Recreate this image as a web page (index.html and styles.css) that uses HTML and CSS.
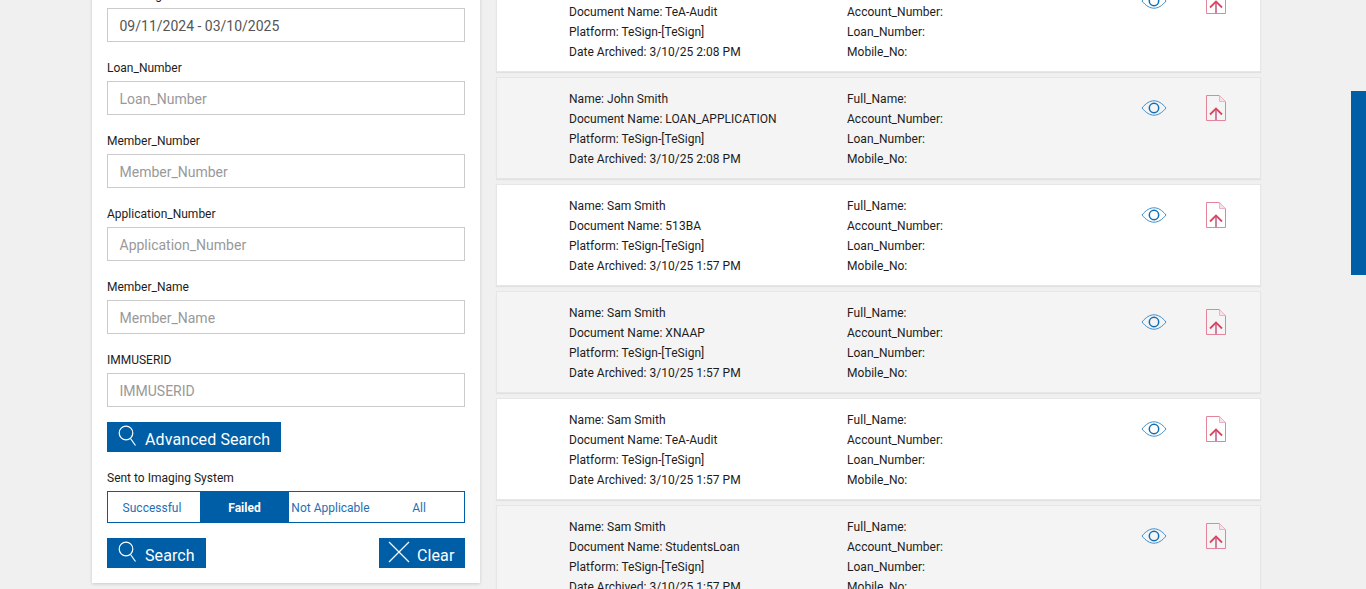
FILE: index.html
```html
<!DOCTYPE html>
<html lang="en">
<head>
<meta charset="utf-8">
<title>Archive Search</title>
<link rel="stylesheet" href="styles.css">
</head>
<body>
<svg class="defs" width="0" height="0" aria-hidden="true">
  <symbol id="eye" viewBox="0 0 26 18">
    <path d="M1 9C5 4 9 1.800 13 1.800S21 4 25 9C21 14 17 16.200 13 16.200S5 14 1 9Z" fill="none" stroke="#3f8fcb" stroke-width="1"/>
    <circle cx="13" cy="9" r="4.700" fill="none" stroke="#0f6db5" stroke-width="1.500"/>
  </symbol>
  <symbol id="doc" viewBox="0 0 20 26">
    <path d="M.5.500H13.500L19.500 6.500V25.500H.5Z" fill="none" stroke="#e4849a" stroke-width="1"/>
    <path d="M13.500.500V6.500H19.500Z" fill="#f6e3ea" stroke="#eab3c3" stroke-width="1"/>
    <path d="M10 25V14" stroke="#c9739a" stroke-width="1.800" fill="none"/>
    <path d="M4 19.500L10 13.500L16 19.500" stroke="#d9465f" stroke-width="1.800" fill="none"/>
  </symbol>
  <symbol id="search" viewBox="0 0 20 22">
    <circle cx="8" cy="8" r="6.800" fill="none" stroke="#fff" stroke-width="1.200"/>
    <path d="M12.500 13.500L17.500 20.500" stroke="#fff" stroke-width="1.200" fill="none"/>
  </symbol>
  <symbol id="cross" viewBox="0 0 22 22">
    <path d="M1 1L21 21M21 1L1 21" stroke="#fff" stroke-width="1.200" fill="none"/>
  </symbol>
</svg>

<main class="page">
  <aside class="panel">
    <div class="field">
      <label class="label">Date Range</label>
      <div class="input value">09/11/2024 - 03/10/2025</div>
    </div>
    <div class="field">
      <label class="label">Loan_Number</label>
      <div class="input">Loan_Number</div>
    </div>
    <div class="field">
      <label class="label">Member_Number</label>
      <div class="input">Member_Number</div>
    </div>
    <div class="field">
      <label class="label">Application_Number</label>
      <div class="input">Application_Number</div>
    </div>
    <div class="field">
      <label class="label">Member_Name</label>
      <div class="input">Member_Name</div>
    </div>
    <div class="field">
      <label class="label">IMMUSERID</label>
      <div class="input">IMMUSERID</div>
    </div>
    <button class="btn btn-adv"><svg class="btn-icon"><use href="#search"/></svg>Advanced Search</button>
    <div class="label label-sent">Sent to Imaging System</div>
    <div class="toggle">
      <span class="opt opt-a">Successful</span>
      <span class="opt opt-b active">Failed</span>
      <span class="opt opt-c">Not Applicable</span>
      <span class="opt opt-d">All</span>
    </div>
    <div class="actions">
      <button class="btn btn-search"><svg class="btn-icon"><use href="#search"/></svg>Search</button>
      <button class="btn btn-clear"><svg class="btn-icon cross"><use href="#cross"/></svg>Clear</button>
    </div>
  </aside>

  <section class="results">
    <article class="card">
      <div class="col col-a"><p>Name: Sam Smith</p><p>Document Name: TeA-Audit</p><p>Platform: TeSign-[TeSign]</p><p>Date Archived: 3/10/25 2:08 PM</p></div>
      <div class="col col-b"><p>Full_Name:</p><p>Account_Number:</p><p>Loan_Number:</p><p>Mobile_No:</p></div>
      <svg class="eye"><use href="#eye"/></svg><svg class="doc"><use href="#doc"/></svg>
    </article>
    <article class="card alt">
      <div class="col col-a"><p>Name: John Smith</p><p>Document Name: LOAN_APPLICATION</p><p>Platform: TeSign-[TeSign]</p><p>Date Archived: 3/10/25 2:08 PM</p></div>
      <div class="col col-b"><p>Full_Name:</p><p>Account_Number:</p><p>Loan_Number:</p><p>Mobile_No:</p></div>
      <svg class="eye"><use href="#eye"/></svg><svg class="doc"><use href="#doc"/></svg>
    </article>
    <article class="card">
      <div class="col col-a"><p>Name: Sam Smith</p><p>Document Name: 513BA</p><p>Platform: TeSign-[TeSign]</p><p>Date Archived: 3/10/25 1:57 PM</p></div>
      <div class="col col-b"><p>Full_Name:</p><p>Account_Number:</p><p>Loan_Number:</p><p>Mobile_No:</p></div>
      <svg class="eye"><use href="#eye"/></svg><svg class="doc"><use href="#doc"/></svg>
    </article>
    <article class="card alt">
      <div class="col col-a"><p>Name: Sam Smith</p><p>Document Name: XNAAP</p><p>Platform: TeSign-[TeSign]</p><p>Date Archived: 3/10/25 1:57 PM</p></div>
      <div class="col col-b"><p>Full_Name:</p><p>Account_Number:</p><p>Loan_Number:</p><p>Mobile_No:</p></div>
      <svg class="eye"><use href="#eye"/></svg><svg class="doc"><use href="#doc"/></svg>
    </article>
    <article class="card">
      <div class="col col-a"><p>Name: Sam Smith</p><p>Document Name: TeA-Audit</p><p>Platform: TeSign-[TeSign]</p><p>Date Archived: 3/10/25 1:57 PM</p></div>
      <div class="col col-b"><p>Full_Name:</p><p>Account_Number:</p><p>Loan_Number:</p><p>Mobile_No:</p></div>
      <svg class="eye"><use href="#eye"/></svg><svg class="doc"><use href="#doc"/></svg>
    </article>
    <article class="card alt">
      <div class="col col-a"><p>Name: Sam Smith</p><p>Document Name: StudentsLoan</p><p>Platform: TeSign-[TeSign]</p><p>Date Archived: 3/10/25 1:57 PM</p></div>
      <div class="col col-b"><p>Full_Name:</p><p>Account_Number:</p><p>Loan_Number:</p><p>Mobile_No:</p></div>
      <svg class="eye"><use href="#eye"/></svg><svg class="doc"><use href="#doc"/></svg>
    </article>
  </section>
</main>
<div class="thumb"></div>
</body>
</html>
```
FILE: styles.css
```css
* { box-sizing: border-box; }
html, body { height: 100%; }
body {
  margin: 0;
  height: 589px;
  overflow: hidden;
  background: #f0f0f0;
  font-family: Roboto, "Liberation Sans", sans-serif;
  color: #1c1c1c;
  position: relative;
}
.defs { position: absolute; }
.page {
  display: flex;
  align-items: flex-start;
  gap: 16px;
  padding-left: 92px;
  margin-top: -30px;
}
.panel {
  width: 388px;
  flex: none;
  height: 613px;
  background: #fff;
  box-shadow: 0 1px 3px rgba(0,0,0,.16);
  padding: 0 15px;
}
.field { height: 73px; padding-top: 19px; }
.field:first-child { height: 72px; padding-top: 18px; }
.label {
  display: block;
  font-size: 12px;
  line-height: 14px;
  height: 14px;
  color: #1c1c1c;
}
.field .label { margin-bottom: 6px; }
.input {
  height: 34px;
  border: 1px solid #cbcbcb;
  background: #fff;
  font-size: 14px;
  line-height: 34px;
  padding-left: 11.500px;
  color: #999;
}
.input.value { color: #555; }
.btn {
  display: inline-flex;
  align-items: center;
  height: 30px;
  border: 0;
  margin: 0;
  padding: 4px 10px 0 11px;
  background: #005ea6;
  color: #fff;
  font-family: inherit;
  font-size: 16px;
  letter-spacing: .1px;
}
.btn-icon { width: 20px; height: 22px; margin-right: 7px; margin-top: -7px; flex: none; }
.btn-icon.cross { width: 22px; margin-left: -2px; margin-right: 7px; }
.btn-adv { margin-top: 15px; display: flex; width: 174px; }
.label-sent { margin-top: 19px; }
.toggle {
  display: flex;
  margin-top: 6px;
  height: 32px;
  border: 1px solid #005ea6;
  font-size: 12px;
  line-height: 32px;
  color: #1f6fb2;
  text-align: center;
}
.opt { display: block; white-space: nowrap; }
.opt-a { width: 92px; padding-right: 4px; }
.opt-b { width: 89px; }
.opt-c { width: 83px; }
.opt-d { width: 92px; flex: none; padding-left: 2px; }
.active { background: #005ea6; color: #fff; font-weight: 700; }
.actions {
  display: flex;
  justify-content: space-between;
  margin-top: 15px;
}
.btn-search { width: 99px; }
.btn-clear { width: 86px; }
.results {
  width: 765px;
  flex: none;
  display: flex;
  flex-direction: column;
  gap: 5px;
}
.card {
  display: flex;
  height: 102px;
  flex: none;
  background: #fff;
  border: 1px solid #e6e6e6;
  box-shadow: 0 1px 1px rgba(0,0,0,.06);
  padding: 11px 0 0 72px;
  width: 765px;
}
.card.alt { background: #f4f4f4; }
.col { font-size: 12px; line-height: 20px; color: #1c1c1c; letter-spacing: .03px; }
.col p { margin: 0; white-space: nowrap; }
.col-a { width: 278px; }
.col-b { width: 294px; }
.eye { width: 26px; height: 18px; margin-top: 10px; flex: none; }
.doc { width: 20px; height: 26px; margin-left: 39px; margin-top: 6px; flex: none; }
.thumb {
  position: absolute;
  right: 0;
  top: 91px;
  width: 15px;
  height: 184px;
  background: #005ea6;
}
```
